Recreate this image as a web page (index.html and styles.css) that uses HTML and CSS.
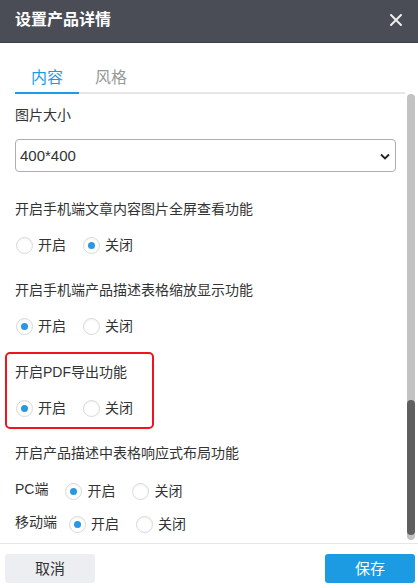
FILE: index.html
```html
<!DOCTYPE html>
<html lang="zh-CN">
<head>
<meta charset="utf-8">
<title>设置产品详情</title>
<link rel="stylesheet" href="styles.css">
</head>
<body>
<div class="dialog">
  <header class="dlg-header">
    <span class="dlg-title">设置产品详情</span>
    <svg class="dlg-close" width="12" height="12" viewBox="0 0 12 12"><path d="M1 1L11 11M11 1L1 11" stroke="#eeeeee" stroke-width="2" stroke-linecap="round"/></svg>
  </header>
  <nav class="tabs">
    <span class="tab active">内容</span>
    <span class="tab">风格</span>
  </nav>
  <main class="body">
    <div class="content">
      <div class="label first">图片大小</div>
      <div class="select">
        <span>400*400</span>
        <svg width="10" height="7" viewBox="0 0 10 7"><path d="M1 1.5L5 5.5L9 1.5" fill="none" stroke="#222" stroke-width="1.8"/></svg>
      </div>

      <div class="field f1">
        <div class="label">开启手机端文章内容图片全屏查看功能</div>
        <div class="options">
          <span class="opt"><i class="radio"></i>开启</span>
          <span class="opt"><i class="radio checked"></i>关闭</span>
        </div>
      </div>

      <div class="field f2">
        <div class="label">开启手机端产品描述表格缩放显示功能</div>
        <div class="options">
          <span class="opt"><i class="radio checked"></i>开启</span>
          <span class="opt"><i class="radio"></i>关闭</span>
        </div>
      </div>

      <div class="field highlight">
        <div class="label">开启PDF导出功能</div>
        <div class="options">
          <span class="opt"><i class="radio checked"></i>开启</span>
          <span class="opt"><i class="radio"></i>关闭</span>
        </div>
      </div>

      <div class="field f4">
        <div class="label">开启产品描述中表格响应式布局功能</div>
        <div class="options row-pc">
          <span class="row-label">PC端</span>
          <span class="opt"><i class="radio checked"></i>开启</span>
          <span class="opt"><i class="radio"></i>关闭</span>
        </div>
        <div class="options row-mobile">
          <span class="row-label">移动端</span>
          <span class="opt"><i class="radio checked"></i>开启</span>
          <span class="opt"><i class="radio"></i>关闭</span>
        </div>
      </div>
    </div>
    <div class="scrollbar"><div class="thumb"></div></div>
  </main>
  <footer class="dlg-footer">
    <button class="btn cancel">取消</button>
    <button class="btn save">保存</button>
  </footer>
</div>
</body>
</html>
```

FILE: styles.css
```css
* { box-sizing: border-box; }
html, body { margin: 0; padding: 0; background: #fff; }
body {
  font-family: "Liberation Sans", "Noto Sans CJK SC", sans-serif;
  color: #333;
  font-size: 14px;
}
.dialog {
  width: 418px;
  height: 588px;
  display: flex;
  flex-direction: column;
  overflow: hidden;
}
.dlg-header {
  height: 43px;
  flex: none;
  background: #4a4d55;
  border-bottom: 1px solid #3d4047;
  display: flex;
  align-items: center;
  justify-content: space-between;
  padding: 0 16px 2px 15px;
}
.dlg-title {
  color: #fff;
  font-size: 16px;
  font-weight: bold;
  line-height: 22px;
}
.dlg-close { display: block; }

.tabs {
  flex: none;
  margin: 20px 13px 0 15px;
  display: flex;
  border-bottom: 2px solid #e6e6e6;
}
.tab {
  font-size: 16px;
  line-height: 29px;
  padding: 0 16px;
  color: #999;
  margin-bottom: -2px;
  border-bottom: 2px solid transparent;
}
.tab.active {
  color: #1f9be3;
  border-bottom-color: #1f9be3;
}

.body {
  height: 449px;
  flex: none;
  display: flex;
  overflow: hidden;
}
.content {
  flex: 1;
  padding: 0 11px 0 15px;
}
.label {
  line-height: 20px;
  font-size: 14px;
  color: #333;
  white-space: nowrap;
}
.label.first { margin-top: 11px; }
.select {
  margin-top: 14px;
  height: 33px;
  border: 1px solid #adadad;
  border-radius: 4px;
  display: flex;
  align-items: center;
  justify-content: space-between;
  padding: 0 5px 0 4px;
  font-size: 15px;
  color: #333;
}
.select svg { display: block; margin-top: 1px; }

.field.f1 { margin-top: 27px; }
.field.f2 { margin-top: 25px; }
.field.highlight {
  margin-top: 16px;
  margin-left: -10px;
  width: 149px;
  border: 2px solid #f0141e;
  border-radius: 5px;
  padding: 8px 8px 9px 8px;
}
.field.f4 { margin-top: 14px; }

.options {
  margin-top: 16px;
  height: 20px;
  display: flex;
  align-items: center;
}
.opt {
  flex: none;
  white-space: nowrap;
  display: flex;
  align-items: center;
  line-height: 20px;
  font-size: 14px;
  margin-right: 16px;
}
.opt:last-child { margin-right: 0; }
.radio {
  flex: none;
  width: 17px;
  height: 17px;
  border: 1px solid #d9d9d9;
  border-radius: 50%;
  background: #fff;
  box-shadow: inset 0 1px 2px rgba(0,0,0,0.06);
  margin: 0 5px 0 1px;
  display: flex;
  align-items: center;
  justify-content: center;
}
.radio.checked::after {
  content: "";
  width: 7px;
  height: 7px;
  border-radius: 50%;
  background: #2a97e0;
}
.options.row-pc { margin-top: 18px; }
.options.row-mobile { margin-top: 13px; }
.row-label {
  flex: none;
  white-space: nowrap;
  line-height: 20px;
  margin-top: -4px;
}
.row-pc .row-label { margin-right: 16px; }
.row-mobile .row-label { margin-right: 11px; }

.scrollbar {
  flex: none;
  width: 8px;
  height: 446px;
  margin-right: 3px;
  background: #c2c2c2;
  border-radius: 4px;
  display: flex;
  flex-direction: column;
  justify-content: flex-end;
  padding-bottom: 5px;
}
.thumb {
  height: 135px;
  background: #5f5f5f;
  border-radius: 4px;
}

.dlg-footer {
  flex: 1;
  border-top: 1px solid #e6e6e6;
  display: flex;
  justify-content: space-between;
  align-items: flex-start;
  padding: 10px 3px 0 5px;
}
.btn {
  width: 90px;
  height: 29px;
  border: none;
  border-radius: 3px;
  font-family: "Liberation Sans", "Noto Sans CJK SC", sans-serif;
  font-size: 15px;
  padding: 0;
  line-height: 29px;
}
.btn.cancel { background: #eceef1; color: #333; }
.btn.save { background: #1d9be2; color: #fff; }
```
